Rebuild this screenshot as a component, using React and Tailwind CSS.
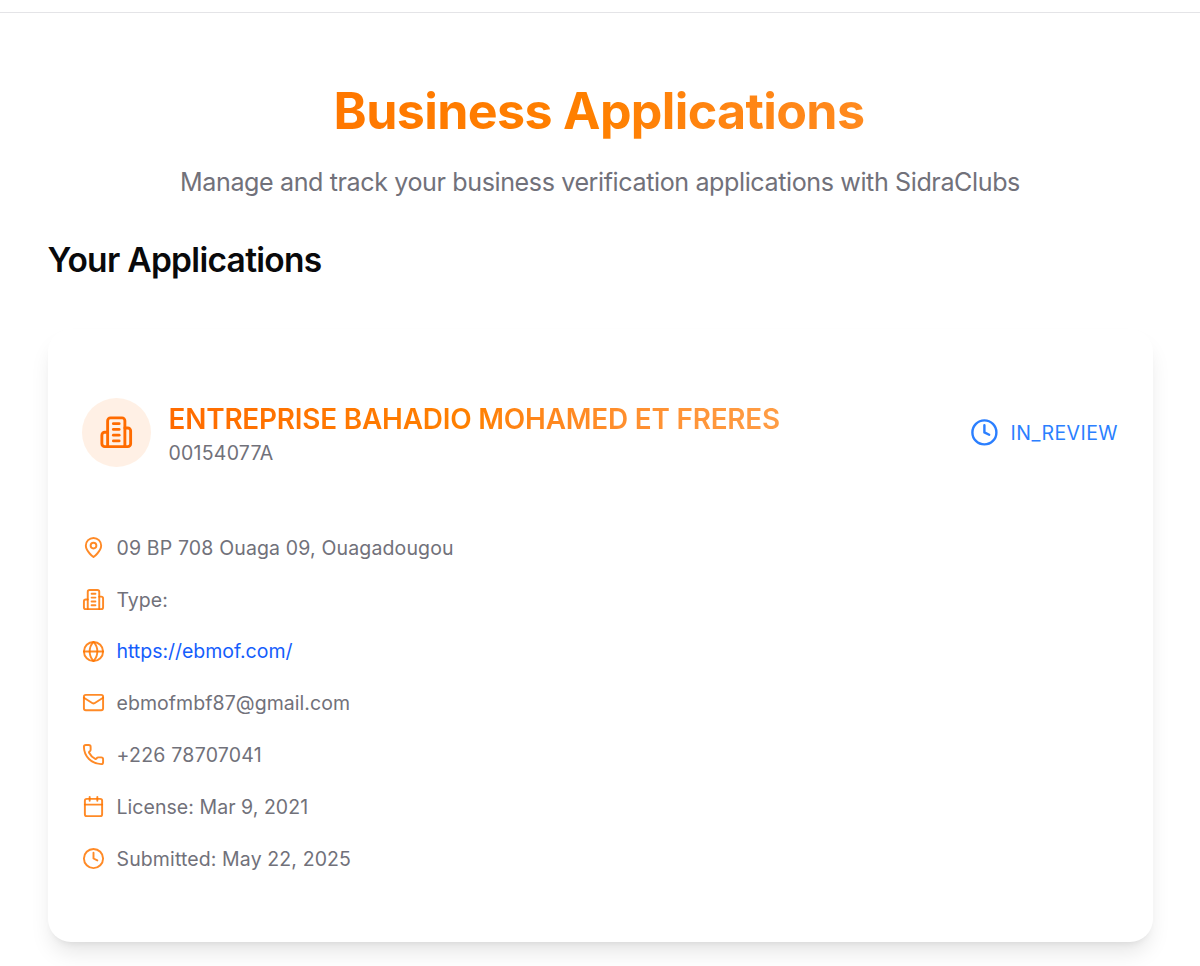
import { Calendar, Clock, Globe, Mail, Phone } from "lucide-react";

function Outline({ size, className, children }) {
  return (
    <svg
      width={size}
      height={size}
      viewBox="0 0 24 24"
      fill="none"
      stroke="currentColor"
      strokeWidth="2"
      strokeLinecap="round"
      strokeLinejoin="round"
      className={className}
    >
      {children}
    </svg>
  );
}

function Building(props) {
  return (
    <Outline {...props}>
      <path d="M6 22V4a2 2 0 0 1 2-2h8a2 2 0 0 1 2 2v18Z" />
      <path d="M6 12H4a2 2 0 0 0-2 2v6a2 2 0 0 0 2 2h2" />
      <path d="M18 9h2a2 2 0 0 1 2 2v9a2 2 0 0 1-2 2h-2" />
      <path d="M10 6h4" />
      <path d="M10 10h4" />
      <path d="M10 14h4" />
      <path d="M10 18h4" />
    </Outline>
  );
}

function Pin(props) {
  return (
    <Outline {...props}>
      <path d="M20 10c0 6-8 12-8 12s-8-6-8-12a8 8 0 0 1 16 0Z" />
      <circle cx="12" cy="10" r="3" />
    </Outline>
  );
}

const details = [
  { icon: Pin, text: "09 BP 708 Ouaga 09, Ouagadougou", spacing: "tracking-[0.15px]" },
  { icon: Building, text: "Type:", spacing: "tracking-[0px]" },
  { icon: Globe, text: "https://ebmof.com/", href: "https://ebmof.com/", spacing: "tracking-[-0.03px]" },
  { icon: Mail, text: "ebmofmbf87@gmail.com", spacing: "tracking-[0.06px]" },
  { icon: Phone, text: "+226 78707041", spacing: "tracking-[0.25px]" },
  { icon: Calendar, text: "License: Mar 9, 2021", spacing: "tracking-[0.05px]" },
  { icon: Clock, text: "Submitted: May 22, 2025", spacing: "tracking-[0.12px]" },
];

function Detail({ icon: Icon, text, href, spacing }) {
  return (
    <div className="flex h-[29px] items-center gap-[11.5px] text-[19.5px] text-[#71717a]">
      <Icon size={23} className="shrink-0 text-[#ff7600]/85" />
      {href ? (
        <a href={href} className={`pt-[2px] text-[#155dfc] ${spacing}`}>{text}</a>
      ) : (
        <span className={`pt-[2px] ${spacing}`}>{text}</span>
      )}
    </div>
  );
}

export default function App() {
  return (
    <div className="h-[966px] overflow-hidden bg-white font-['Inter',sans-serif] text-[#09090b]">
      {/* Bottom edge of the nav bar */}
      <div className="h-[13px] border-b border-[#e4e4e7]" />

      <main className="px-[47.5px] pt-[69px]">
        <div className="text-center">
          <h1 className="bg-linear-to-r from-[#ff6e00] via-[#ff8000] to-[#ff9430] bg-clip-text pr-[2px] text-[50.2px] leading-[58px] font-bold tracking-[-0.66px] text-transparent">
            Business Applications
          </h1>
          <p className="mt-[22px] text-[25.1px] leading-[40px] tracking-[-0.4px] text-[#71717a]">
            Manage and track your business verification applications with SidraClubs
          </p>
        </div>

        <h2 className="mt-[35px] text-[33.5px] leading-[46px] font-semibold tracking-[-0.7px]">Your Applications</h2>

        {/* Application card */}
        <section className="mt-[46px] h-[613px] rounded-[23px] bg-white px-[34.5px] pt-[69px] shadow-[0_14px_22px_-4px_rgba(0,0,0,0.1),0_6px_9px_-6px_rgba(0,0,0,0.1)]">
          <div className="flex h-[69px] items-center justify-between">
            <div className="flex items-center gap-[17.5px]">
              <div className="flex size-[69px] items-center justify-center rounded-full bg-[#ff6b00]/10">
                <Building size={34.5} className="text-[#ff6b00]" />
              </div>
              <div className="pt-px">
                <h3 className="bg-linear-to-r from-[#ff6b00] via-[#ff8000] to-[#ff9d45] bg-clip-text text-[27.9px] leading-[41px] font-semibold tracking-[-0.2px] text-transparent">
                  ENTREPRISE BAHADIO MOHAMED ET FRERES
                </h3>
                <p className="text-[19.5px] leading-[27px] tracking-[0.24px] text-[#71717a]">00154077A</p>
              </div>
            </div>
            <div className="flex items-center gap-[11.5px] text-[#2b7fff]">
              <Clock size={28.8} />
              <span className="pt-[2px] text-[19.5px] tracking-[0.45px]">IN_REVIEW</span>
            </div>
          </div>

          <div className="mt-[66px] flex flex-col gap-[22.8px]">
            {details.map((d) => (
              <Detail key={d.text} {...d} />
            ))}
          </div>
        </section>
      </main>
    </div>
  );
}
